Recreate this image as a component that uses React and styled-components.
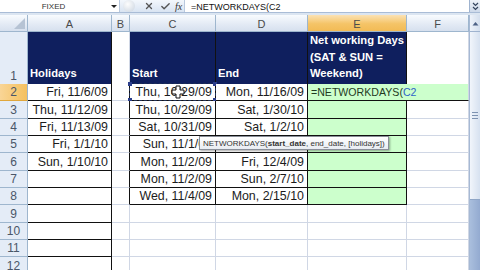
import React from 'react';
import styled, {createGlobalStyle} from 'styled-components';
import {X, Check} from 'lucide-react';

//palette
const navy = '#0f1f5e';
const green = '#ccffcc';
const grid = '#d0d7e5';
const ink = '#1c1c1c';
const headBorder = '#9eb6ce';
const COLS = '28px 84px 18px 86px 92px 99px 62px';

const GlobalStyle = createGlobalStyle`
  * { box-sizing: border-box; }
  body {
    margin: 0;
    background: #fff;
    font-family: "Liberation Sans", Arial, sans-serif;
  }
`;

const Page = styled.div`
  width: 480px;
  height: 270px;
  overflow: hidden;
  display: flex;
  flex-direction: column;
  background: #dfe8f4;
`;

//formula bar
const FormulaBar = styled.div`
  display: flex;
  height: 13px;
  border-bottom: 1px solid #a9bcd6;
  background: #fff;
`;

const NameBox = styled.div`
  width: 119px;
  display: flex;
  align-items: center;
  font-size: 8px;
  color: #333;
  padding-top: 1px;
  span {
    flex: 1;
    text-align: center;
    padding-left: 2px;
    padding-right: 6px;
  }
`;

const DropArrow = styled.div`
  width: 0;
  height: 0;
  margin-right: 2px;
  border-left: 3px solid transparent;
  border-right: 3px solid transparent;
  border-top: 3px solid #222;
`;

const FxButtons = styled.div`
  width: 66px;
  display: flex;
  align-items: center;
  padding-left: 3px;
  background: linear-gradient(#f3f7fc, #d9e4f2);
  border-left: 1px solid #b9c9de;
  border-right: 1px solid #b9c9de;
  color: #4a4a4a;
`;

const Ghost = styled.div`
  width: 12px;
  height: 12px;
  border-radius: 50%;
  background: radial-gradient(circle at 40% 35%, #fdfdfd, #c9d3df);
  margin-right: 6px;
`;

const FxIcon = styled.div`
  width: 16px;
  display: flex;
  justify-content: center;
`;

const FxText = styled.span`
  font-family: "Liberation Serif", serif;
  font-style: italic;
  font-size: 10px;
  color: #333;
  margin-left: 2px;
`;

const FormulaInput = styled.div`
  flex: 1;
  font-size: 9px;
  color: #111;
  padding: 2px 0 0 6px;
  white-space: nowrap;
`;

const ExpandBtn = styled.div`
  width: 11px;
  display: flex;
  align-items: center;
  justify-content: center;
  background: linear-gradient(#eef3fa, #cdd9ea);
  border-left: 1px solid #9fb3cf;
`;

const Strip = styled.div`
  height: 2px;
  background: #dbe5f1;
`;

//sheet
const SheetArea = styled.div`
  flex: 1;
  display: flex;
  min-height: 0;
`;

const Grid = styled.div`
  position: relative;
  width: 469px;
  background: #fff;
`;

const Row = styled.div`
  display: grid;
  grid-template-columns: ${COLS};
  height: ${p => p.$h}px;
`;

const ColHead = styled.div`
  display: flex;
  align-items: center;
  justify-content: center;
  font-size: 11px;
  color: #4a4a4a;
  background: ${p =>
    p.$active
      ? 'linear-gradient(#fbe2b4, #f5c467 55%, #f2bb55)'
      : 'linear-gradient(#f8fbfe, #e4ebf5 55%, #d6e0ee)'};
  border-right: 1px solid ${headBorder};
  border-bottom: 1px solid ${headBorder};
  padding-top: 1px;
`;

const Corner = styled(ColHead)`
  position: relative;
  &::after {
    content: '';
    position: absolute;
    right: 2px;
    bottom: 2px;
    border-left: 11px solid transparent;
    border-bottom: 11px solid #b6c3d4;
  }
`;

const RowHead = styled.div`
  display: flex;
  align-items: flex-end;
  justify-content: center;
  padding-bottom: 1px;
  font-size: 12px;
  color: #4a5668;
  background: ${p =>
    p.$active ? 'linear-gradient(90deg, #f9d596, #f4c05e)' : '#e4ecf7'};
  border-right: 1px solid ${headBorder};
  border-bottom: 1px solid ${p => (p.$active ? '#e0a73c' : headBorder)};
`;

const Cell = styled.div`
  position: relative;
  display: flex;
  align-items: flex-end;
  justify-content: ${p => (p.$left ? 'flex-start' : 'flex-end')};
  grid-column: span ${p => p.$span || 1};
  padding: 0 3px 1px 3px;
  font-size: 12.4px;
  color: ${ink};
  white-space: nowrap;
  background: ${p => p.$fill || '#fff'};
  border-right: 1px solid ${p => (p.$darkRight ? '#111' : grid)};
  border-bottom: 1px solid ${p => (p.$darkBottom ? '#111' : grid)};
`;

const HeadCell = styled(Cell)`
  justify-content: flex-start;
  padding: 0 2px 2px 2px;
  font-size: 11.2px;
  font-weight: bold;
  line-height: 16.7px;
  color: #fff;
  background: ${navy};
`;

const EditText = styled.span`
  font-size: 10.6px;
  color: #1f3a1f;
  padding-bottom: 1px;
  b {
    font-weight: normal;
    color: #2f63c8;
  }
`;

const Ants = styled.div`
  position: absolute;
  inset: -1px;
  border: 1px dashed #1f2f55;
  pointer-events: none;
`;

const Handle = styled.div`
  position: absolute;
  width: 4px;
  height: 4px;
  background: #2c3f8c;
  ${p => (p.$top ? 'top: -2px;' : 'bottom: -2px;')}
  ${p => (p.$right ? 'right: -2px;' : 'left: -2px;')}
`;

const Tooltip = styled.div`
  position: absolute;
  left: 199px;
  top: 121px;
  height: 14px;
  padding: 0 3px;
  display: flex;
  align-items: center;
  font-size: 8px;
  color: #333;
  white-space: nowrap;
  background: linear-gradient(#ffffff, #e8ecf2);
  border: 1px solid #8a8f99;
  box-shadow: 1px 1px 2px rgba(0, 0, 0, 0.35);
  b {
    font-weight: bold;
  }
`;

const Cursor = styled.svg`
  position: absolute;
  left: 171px;
  top: 70px;
`;

//scrollbar
const ScrollBar = styled.div`
  width: 11px;
  display: flex;
  flex-direction: column;
  background: #c1d0e5;
  border-left: 1px solid #a6b9d4;
`;

const ScrollUp = styled.div`
  height: 17px;
  display: flex;
  align-items: center;
  justify-content: center;
  background: linear-gradient(90deg, #eef3fa, #d4dfee);
  border-bottom: 1px solid #9fb3cf;
`;

const Thumb = styled.div`
  height: 168px;
  display: flex;
  flex-direction: column;
  justify-content: center;
  align-items: center;
  gap: 2px;
  background: linear-gradient(90deg, #f1f5fb, #d6e1f0);
  border-bottom: 1px solid #8fa6c7;
  span {
    width: 6px;
    height: 1px;
    background: #7d92b1;
  }
`;

const Track = styled.div`
  flex: 1;
  background: linear-gradient(90deg, #a9bedd, #93aad0);
`;

const rowHeights = [52, 17, 18, 17, 17, 18, 17, 17, 18, 17, 17, 18];

const holidays = ['Fri, 11/6/09', 'Thu, 11/12/09', 'Fri, 11/13/09', 'Fri, 1/1/10', 'Sun, 1/10/10'];
const starts = ['Thu, 10/29/09', 'Thu, 10/29/09', 'Sat, 10/31/09', 'Sun, 11/1/09', 'Mon, 11/2/09', 'Mon, 11/2/09', 'Wed, 11/4/09'];
const ends = ['Mon, 11/16/09', 'Sat, 1/30/10', 'Sat, 1/2/10', 'Thu, 12/31/09', 'Fri, 12/4/09', 'Sun, 2/7/10', 'Mon, 2/15/10'];

function DataRow({n, h}) {
  const i = n - 2;
  const inTable = n <= 8;
  return (
    <Row $h={h}>
      <RowHead $active={n === 2}>{n}</RowHead>
      <Cell $darkRight $darkBottom>{holidays[i] || ''}</Cell>
      <Cell $darkRight={inTable} />
      <Cell $darkRight={inTable} $darkBottom={inTable}>
        {starts[i] || ''}
        {n === 2 && (
          <Ants>
            <Handle $top />
            <Handle $top $right />
            <Handle />
            <Handle $right />
          </Ants>
        )}
      </Cell>
      <Cell $darkRight={inTable} $darkBottom={inTable}>{ends[i] || ''}</Cell>
      {n === 2 ? (
        <Cell $span={2} $left $fill={green} $darkBottom>
          <EditText>
            =NETWORKDAYS(<b>C2</b>
          </EditText>
        </Cell>
      ) : (
        <>
          <Cell $fill={inTable ? green : null} $darkRight={inTable} $darkBottom={inTable} />
          <Cell />
        </>
      )}
    </Row>
  );
}

export default function App() {
  return (
    <Page>
      <GlobalStyle />
      <FormulaBar>
        <NameBox>
          <span>FIXED</span>
          <DropArrow />
        </NameBox>
        <FxButtons>
          <Ghost />
          <FxIcon>
            <X size={10} strokeWidth={3.2} color="#555" />
          </FxIcon>
          <FxIcon>
            <Check size={11} strokeWidth={3} color="#555" />
          </FxIcon>
          <FxText>fx</FxText>
        </FxButtons>
        <FormulaInput>=NETWORKDAYS(C2</FormulaInput>
        <ExpandBtn>
          <svg width="7" height="9" viewBox="0 0 7 9">
            <path d="M1 1l2.5 2.5L6 1M1 5l2.5 2.5L6 5" fill="none" stroke="#33445e" strokeWidth="1.2" />
          </svg>
        </ExpandBtn>
      </FormulaBar>
      <Strip />
      <SheetArea>
        <Grid>
          <Row $h={17}>
            <Corner />
            <ColHead>A</ColHead>
            <ColHead>B</ColHead>
            <ColHead>C</ColHead>
            <ColHead>D</ColHead>
            <ColHead $active>E</ColHead>
            <ColHead>F</ColHead>
          </Row>
          <Row $h={rowHeights[0]}>
            <RowHead>1</RowHead>
            <HeadCell $darkRight $darkBottom>Holidays</HeadCell>
            <Cell />
            <HeadCell $darkRight $darkBottom>Start</HeadCell>
            <HeadCell $darkRight $darkBottom>End</HeadCell>
            <HeadCell $darkRight $darkBottom>
              <div>
                Net working Days
                <br />
                (SAT &amp; SUN =
                <br />
                Weekend)
              </div>
            </HeadCell>
            <Cell />
          </Row>
          {rowHeights.slice(1).map((h, k) => (
            <DataRow key={k} n={k + 2} h={h} />
          ))}
          <Tooltip>
            NETWORKDAYS(<b>start_date</b>, end_date, [holidays])
          </Tooltip>
          <Cursor width="14" height="14" viewBox="0 0 14 14">
            <path
              d="M5 1h4v4h4v4H9v4H5V9H1V5h4z"
              fill="#fff"
              stroke="#111"
              strokeWidth="1"
            />
          </Cursor>
        </Grid>
        <ScrollBar>
          <ScrollUp>
            <svg width="7" height="5" viewBox="0 0 7 5">
              <path d="M0.5 4.5L3.5 1l3 3.5z" fill="#4d6185" />
            </svg>
          </ScrollUp>
          <Thumb>
            <span />
            <span />
            <span />
          </Thumb>
          <Track />
        </ScrollBar>
      </SheetArea>
    </Page>
  );
}
